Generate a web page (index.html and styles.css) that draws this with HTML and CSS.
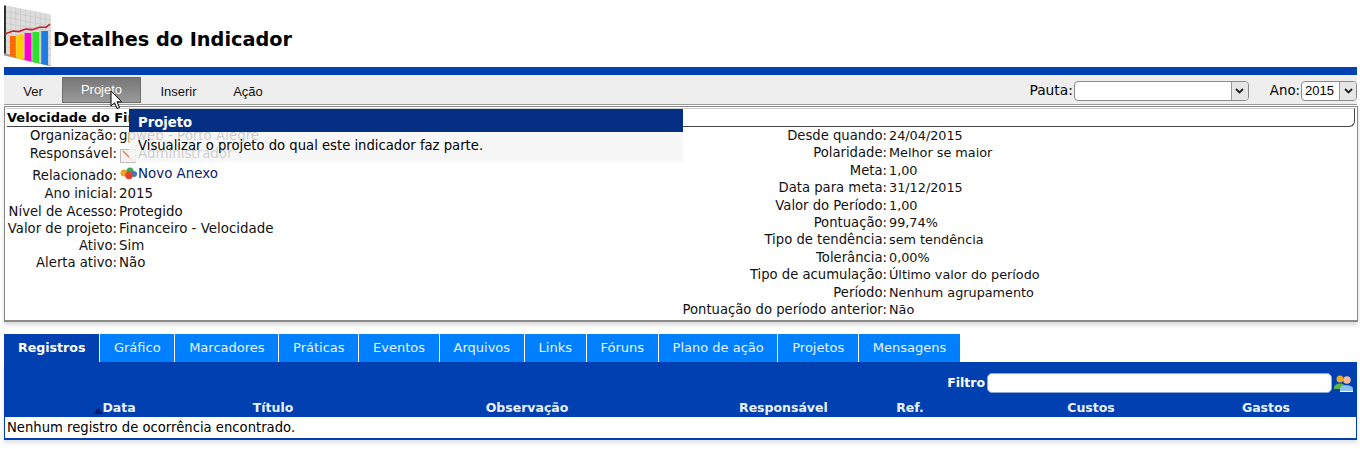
FILE: index.html
```html
<!DOCTYPE html>
<html lang="pt">
<head>
<meta charset="utf-8">
<title>Detalhes do Indicador</title>
<link rel="stylesheet" href="styles.css">
</head>
<body>
<header class="page-head">
  <svg class="logo" width="50" height="63" viewBox="0 0 50 63">
    <path d="M2 1L48 10V62L2 49Z" fill="#dddddd"/>
    <path d="M7 2V50M12 3V52M17 4V53M22 5V55M27 6V56M32 7V57M37 8V59M42 9V60M2 7L48 16M2 13L48 22M2 19L48 27M2 25L48 33M2 31L48 39M2 37L48 45M2 43L48 52" stroke="#c6c6c6" stroke-width=".7" fill="none"/>
    <path d="M0 1H2V50H0Z" fill="#2b2b2b"/>
    <path d="M0 49L48 62V63L0 52Z" fill="#777" opacity=".7"/>
    <path d="M6 32L12 32V54L6 52.500Z" fill="#ff6a00"/>
    <path d="M12.500 31L20 30V56L12.500 54.500Z" fill="#ffcc00"/>
    <path d="M21 29L28 29V58L21 56.500Z" fill="#ff00d0"/>
    <path d="M29 28L36 28V60L29 58.500Z" fill="#2fe02f"/>
    <path d="M38 27L45 27V62L38 60.500Z" fill="#1f7de0"/>
    <path d="M1 30L9 27L15 27.500L22 25L29 25.500L36 23L43 23L47 20" stroke="#c81e2c" stroke-width="1.600" fill="none"/>
  </svg>
  <h1 class="page-title">Detalhes do Indicador</h1>
</header>
<div class="blue-rule"></div>
<nav class="menu-bar">
  <div class="menu-items">
    <span class="menu-item">Ver</span>
    <span class="menu-item is-hover">Projeto</span>
    <span class="menu-item">Inserir</span>
    <span class="menu-item">Ação</span>
  </div>
  <div class="menu-tools">
    <label class="tool-label">Pauta:</label>
    <div class="fake-select pauta"><span class="sel-value"></span><span class="sel-arrow"><svg width="9" height="6" viewBox="0 0 9 6"><path d="M1 1L4.500 4.500L8 1" stroke="#222" stroke-width="1.800" fill="none"/></svg></span></div>
    <label class="tool-label ano-label">Ano:</label>
    <div class="fake-select ano"><span class="sel-value">2015</span><span class="sel-arrow"><svg width="9" height="6" viewBox="0 0 9 6"><path d="M1 1L4.500 4.500L8 1" stroke="#222" stroke-width="1.800" fill="none"/></svg></span></div>
  </div>
</nav>
<section class="details">
  <div class="details-title">Velocidade do Financeiro</div>
  <div class="details-cols">
    <div class="info left-info">
      <div class="lbl">Organização:</div><div class="val">gpweb - Porto Alegre</div>
      <div class="lbl">Responsável:</div><div class="val val-user"><svg class="user-ic" width="17" height="14" viewBox="0 0 17 14"><rect x=".5" y=".5" width="15" height="13" fill="#f4f1ee" stroke="#bbb"/><path d="M3 2L13 12" stroke="#d9836f" stroke-width="1.500"/></svg>Administrador</div>
      <div class="lbl tall">Relacionado:</div><div class="val tall val-rel"><svg width="19" height="14" viewBox="0 0 19 14"><circle cx="5" cy="6" r="3.500" fill="#f0a020"/><circle cx="11" cy="4" r="3.500" fill="#3aa655"/><circle cx="15" cy="7" r="3" fill="#3c78c8"/><circle cx="10" cy="8.500" r="3.800" fill="#e0442c"/></svg><a class="link">Novo Anexo</a></div>
      <div class="lbl">Ano inicial:</div><div class="val">2015</div>
      <div class="lbl tight">Nível de Acesso:</div><div class="val tight">Protegido</div>
      <div class="lbl tight">Valor de projeto:</div><div class="val tight">Financeiro - Velocidade</div>
      <div class="lbl tight">Ativo:</div><div class="val tight">Sim</div>
      <div class="lbl tight">Alerta ativo:</div><div class="val tight">Não</div>
    </div>
    <div class="info right-info">
      <div class="lbl">Desde quando:</div><div class="val">24/04/2015</div>
      <div class="lbl">Polaridade:</div><div class="val">Melhor se maior</div>
      <div class="lbl">Meta:</div><div class="val">1,00</div>
      <div class="lbl">Data para meta:</div><div class="val">31/12/2015</div>
      <div class="lbl">Valor do Período:</div><div class="val">1,00</div>
      <div class="lbl">Pontuação:</div><div class="val">99,74%</div>
      <div class="lbl">Tipo de tendência:</div><div class="val">sem tendência</div>
      <div class="lbl">Tolerância:</div><div class="val">0,00%</div>
      <div class="lbl">Tipo de acumulação:</div><div class="val">Último valor do período</div>
      <div class="lbl">Período:</div><div class="val">Nenhum agrupamento</div>
      <div class="lbl">Pontuação do período anterior:</div><div class="val">Não</div>
    </div>
  </div>
</section>
<nav class="tabs">
  <span class="tab active">Registros</span>
  <span class="tab">Gráfico</span>
  <span class="tab">Marcadores</span>
  <span class="tab">Práticas</span>
  <span class="tab">Eventos</span>
  <span class="tab">Arquivos</span>
  <span class="tab">Links</span>
  <span class="tab">Fóruns</span>
  <span class="tab">Plano de ação</span>
  <span class="tab">Projetos</span>
  <span class="tab">Mensagens</span>
</nav>
<section class="panel">
  <div class="filter-row">
    <span class="filter-label">Filtro</span>
    <div class="filter-input"></div>
    <svg class="filter-ic" width="21" height="19" viewBox="0 0 21 19"><circle cx="7" cy="5" r="3.500" fill="#e8a828"/><path d="M1 14C1 8 13 8 13 14V15H1Z" fill="#57b845"/><circle cx="14" cy="6" r="3.800" fill="#f3b9a0"/><path d="M7 15C7 10 20 10 20 15V18H7Z" fill="#8cc0ee"/><path d="M7 17.500H20" stroke="#fff"/></svg>
  </div>
  <div class="grid-head">
    <span class="th th-data"><svg class="sort" width="10" height="6" viewBox="0 0 10 6"><path d="M0 6L5 0L10 6Z" fill="#0b1f6e"/></svg>Data</span>
    <span class="th">Título</span>
    <span class="th">Observação</span>
    <span class="th">Responsável</span>
    <span class="th">Ref.</span>
    <span class="th">Custos</span>
    <span class="th">Gastos</span>
  </div>
  <div class="empty-row">Nenhum registro de ocorrência encontrado.</div>
</section>
<aside class="tooltip">
  <div class="tip-head">Projeto</div>
  <div class="tip-body">Visualizar o projeto do qual este indicador faz parte.</div>
</aside>
<svg class="cursor" width="14" height="20" viewBox="0 0 14 20"><path d="M1 1V16L4.500 12.800L7 18.500L9.500 17.500L7 11.800H11.800Z" fill="#fff" stroke="#000"/></svg>
</body>
</html>
```
FILE: styles.css
```css
html, body { margin: 0; padding: 0; }
body {
  width: 1360px;
  height: 449px;
  overflow: hidden;
  background: #fff;
  color: #000;
  font: 13.2px/17.4px "DejaVu Sans", Verdana, sans-serif;
  position: relative;
}
.page-head {
  display: flex;
  align-items: flex-end;
  height: 67px;
  padding-left: 4px;
  box-sizing: border-box;
}
.logo { display: block; flex: none; overflow: visible; width: 49px; }
.page-title {
  margin: 0 0 15px 0;
  font: bold 19.300px/24px "DejaVu Sans", Verdana, sans-serif;
}
.blue-rule { height: 8px; margin: 0 3px 0 4px; background: #0040b0; }
.menu-bar {
  display: flex;
  justify-content: space-between;
  align-items: center;
  height: 29px;
  margin: 0 3px 0 4px;
  background: #eeeeee;
  border-bottom: 1px solid #999;
}
.menu-items { display: flex; }
.menu-item {
  display: flex;
  align-items: center;
  justify-content: center;
  height: 26px;
  padding-top: 3px;
  font: 13px "Liberation Sans", Arial, sans-serif;
  color: #111;
  box-sizing: border-box;
}
.menu-item:nth-child(1) { width: 58px; }
.menu-item.is-hover {
  width: 79px;
  padding-top: 0;
  color: #fff;
  background: linear-gradient(#777, #999);
  border: 1px solid #6f6f6f;
}
.menu-item:nth-child(3) { width: 75px; }
.menu-item:nth-child(4) { width: 42px; margin-left: 11px; }
.menu-tools { display: flex; align-items: center; padding-top: 3px; }
.tool-label { font-size: 13.8px; margin-right: 1px; }
.ano-label { margin-left: 21px; font-size: 13.3px; }
.fake-select {
  display: flex;
  height: 20px;
  box-sizing: border-box;
  background: #fff;
  border: 1px solid #8a8a8a;
  border-radius: 4px;
  overflow: hidden;
}
.pauta { width: 175px; }
.ano { width: 56px; }
.sel-value {
  flex: 1;
  font: 13px/18px "Liberation Sans", Arial, sans-serif;
  padding-left: 3px;
}
.sel-arrow {
  display: flex;
  align-items: center;
  justify-content: center;
  width: 16px;
  background: #e6e6e6;
  border-left: 1px solid #999;
}
.details {
  height: 213px;
  margin: 1px 2px 0 4px;
  border: 1px solid #8a8a8a;
  border-bottom: 2px solid #8a8a8a;
  box-shadow: 0 3px 4px rgba(0,0,0,.15);
}
.details-title {
  height: 17px;
  margin: 1px 2px 0 2px;
  font: bold 13px/17px "DejaVu Sans", Verdana, sans-serif;
  border-bottom: 1px solid #444;
  border-right: 1px solid #444;
  border-top: 1px solid #ccc;
  border-radius: 0 0 6px 0;
  white-space: nowrap;
}
.details-cols { display: flex; }
.info {
  display: grid;
  align-content: start;
  column-gap: 2px;
  grid-auto-rows: 17.4px;
}
.left-info { grid-template-columns: 112px 400px; grid-auto-rows: auto; }
.left-info .lbl, .left-info .val { height: 18px; }
.left-info .tight { height: 17px; }
.left-info .val { font-size: 13.4px; }
.right-info { grid-template-columns: 360px 460px; margin-left: 8px; }
.right-info .val { font-size: 12.800px; }
.lbl { text-align: right; white-space: nowrap; color: #111; }
.val { white-space: nowrap; color: #111; }
.val-user { display: flex; align-items: center; }
.user-ic { margin: 3px 1px 0 1px; flex: none; }
.left-info .tall { height: 22px; padding-top: 4px; box-sizing: border-box; }
.left-info .val-rel { display: flex; align-items: flex-start; padding-top: 2px; }
.val-rel svg { margin: 2px 0 0 0; flex: none; }
.link { color: #0b1a6e; }
.tabs {
  display: flex;
  margin: 12px 0 0 4px;
  height: 28px;
}
.tab {
  display: flex;
  align-items: center;
  padding: 0 13.500px 0 14px;
  border-right: 1px solid #fff;
  background: #0080ff;
  color: #e8f2ff;
  font-size: 13px;
  line-height: 28px;
  white-space: nowrap;
}
.tab:last-child { border-right: 0; }
.tab.active { background: #0040b0; color: #fff; font-weight: bold; font-size: 12.600px; }
.panel {
  margin: 0 3px 0 4px;
  height: 78px;
  background: #0040b0;
  border-bottom: 2px solid #0040b0;
  box-shadow: 0 3px 4px rgba(0,0,0,.12);
  position: relative;
  display: flex;
  flex-direction: column;
  box-sizing: border-box;
}
.filter-row {
  display: flex;
  align-items: center;
  justify-content: flex-end;
  height: 37px;
  padding: 5px 3px 0 0;
  box-sizing: border-box;
}
.filter-label { color: #fff; font-weight: bold; margin-right: 2px; font-size: 12.500px; }
.filter-input {
  width: 345px;
  height: 20px;
  background: #fff;
  border: 1px solid #8fa7d8;
  border-radius: 5px;
  box-sizing: border-box;
}
.filter-ic { margin: 0 0 0 1px; }
.grid-head {
  display: grid;
  grid-template-columns: 227px 84px 424px 86px 170px 192px 158px;
  height: 17px;
  margin-bottom: 1px;
  align-items: center;
  color: #e8f2ff;
  font-weight: bold;
  font-size: 12.500px;
  line-height: 17px;
}
.th { text-align: center; white-space: nowrap; }
.th-data { position: relative; padding-left: 3px; }
.sort { position: absolute; left: 89px; top: 9px; }
.empty-row {
  flex: 1;
  margin: 0 1px;
  padding-left: 2px;
  background: #fff;
  line-height: 21px;
  white-space: nowrap;
}
.tooltip {
  position: absolute;
  left: 129px;
  top: 109px;
  width: 554px;
  height: 53px;
  background: rgba(245,245,245,.82);
}
.tip-head {
  height: 23px;
  padding-left: 9px;
  background: rgba(0,43,127,.98);
  color: #fff;
  font-weight: bold;
  line-height: 27px;
}
.tip-body { padding: 5px 0 0 9px; line-height: 17px; }
.cursor { position: absolute; left: 110px; top: 90px; }
```
